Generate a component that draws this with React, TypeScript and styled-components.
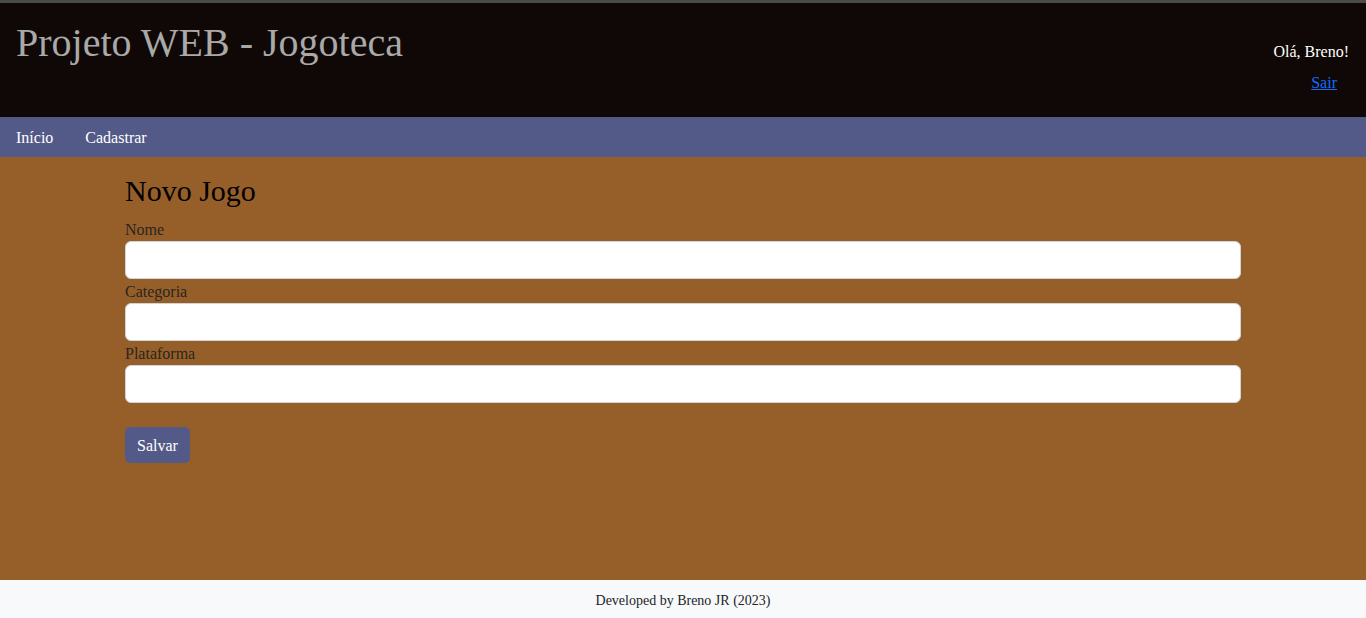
import React from "react";
import styled, { createGlobalStyle } from "styled-components";

const Global = createGlobalStyle`
  html, body { margin: 0; padding: 0; }
  body {
    font-family: "Liberation Serif", "Times New Roman", serif;
    font-size: 16px;
    line-height: 1.5;
    background: #f8f9fa;
  }
  * { box-sizing: border-box; }
`;

const Page = styled.div`
  display: flex;
  flex-direction: column;
  min-height: 618px;
`;

const Header = styled.header`
  display: flex;
  justify-content: space-between;
  align-items: flex-start;
  height: 117px;
  background: #100806;
  border-top: 3px solid #4b4b4b;
  padding: 16px 17px 0 16px;
`;

const Title = styled.h1`
  margin: 0;
  font-size: 40px;
  font-weight: 400;
  line-height: 48px;
  color: #a9a9a9;
`;

const UserBox = styled.div`
  display: flex;
  flex-direction: column;
  align-items: flex-end;
  padding-top: 21px;
  gap: 7px;
`;

const Greeting = styled.span`
  color: #ffffff;
  font-size: 16px;
  line-height: 24px;
`;

const Logout = styled.a`
  color: #0d6efd;
  text-decoration: underline;
  font-size: 16px;
  line-height: 24px;
  margin-right: 12px;
`;

const Nav = styled.nav`
  display: flex;
  align-items: center;
  gap: 32px;
  height: 40px;
  padding: 1px 16px 0;
  background: #545a88;
`;

const NavLink = styled.a`
  color: #ffffff;
  text-decoration: none;
  font-size: 16px;
  line-height: 24px;
`;

const Main = styled.main`
  flex: 1;
  background: #965f2a;
  padding: 16px 125px 0;
`;

const Heading = styled.h2`
  margin: 0 0 8px;
  font-size: 30px;
  font-weight: 400;
  line-height: 36px;
  color: #000000;
`;

const Form = styled.form`
  display: flex;
  flex-direction: column;
  align-items: flex-start;
`;

const Label = styled.label`
  color: #2a2520;
  font-size: 16px;
  line-height: 24px;
  padding-top: 1px;
  margin-bottom: -1px;
`;

const Input = styled.input`
  width: 100%;
  height: 38px;
  border: 1px solid #ced4da;
  border-radius: 6px;
  background: #ffffff;
  padding: 6px 12px;
  font-family: inherit;
  font-size: 16px;
`;

const Button = styled.button`
  margin-top: 24px;
  height: 36px;
  padding: 1px 12px 0;
  border: none;
  border-radius: 5px;
  background: #545a88;
  color: #ffffff;
  font-family: inherit;
  font-size: 16px;
  cursor: pointer;
`;

const Footer = styled.footer`
  height: 38px;
  display: flex;
  align-items: center;
  justify-content: center;
  padding-top: 3px;
  background: #f8f9fa;
  color: #212529;
  font-size: 14px;
`;

export default function App() {
  return (
    <>
      <Global />
      <Page>
        <Header>
          <Title>Projeto WEB - Jogoteca</Title>
          <UserBox>
            <Greeting>Olá, Breno!</Greeting>
            <Logout href="#">Sair</Logout>
          </UserBox>
        </Header>
        <Nav>
          <NavLink href="#">Início</NavLink>
          <NavLink href="#">Cadastrar</NavLink>
        </Nav>
        <Main>
          <Heading>Novo Jogo</Heading>
          <Form onSubmit={(e) => e.preventDefault()}>
            <Label htmlFor="nome">Nome</Label>
            <Input id="nome" type="text" />
            <Label htmlFor="categoria">Categoria</Label>
            <Input id="categoria" type="text" />
            <Label htmlFor="plataforma">Plataforma</Label>
            <Input id="plataforma" type="text" />
            <Button type="submit">Salvar</Button>
          </Form>
        </Main>
        <Footer>Developed by Breno JR (2023)</Footer>
      </Page>
    </>
  );
}
